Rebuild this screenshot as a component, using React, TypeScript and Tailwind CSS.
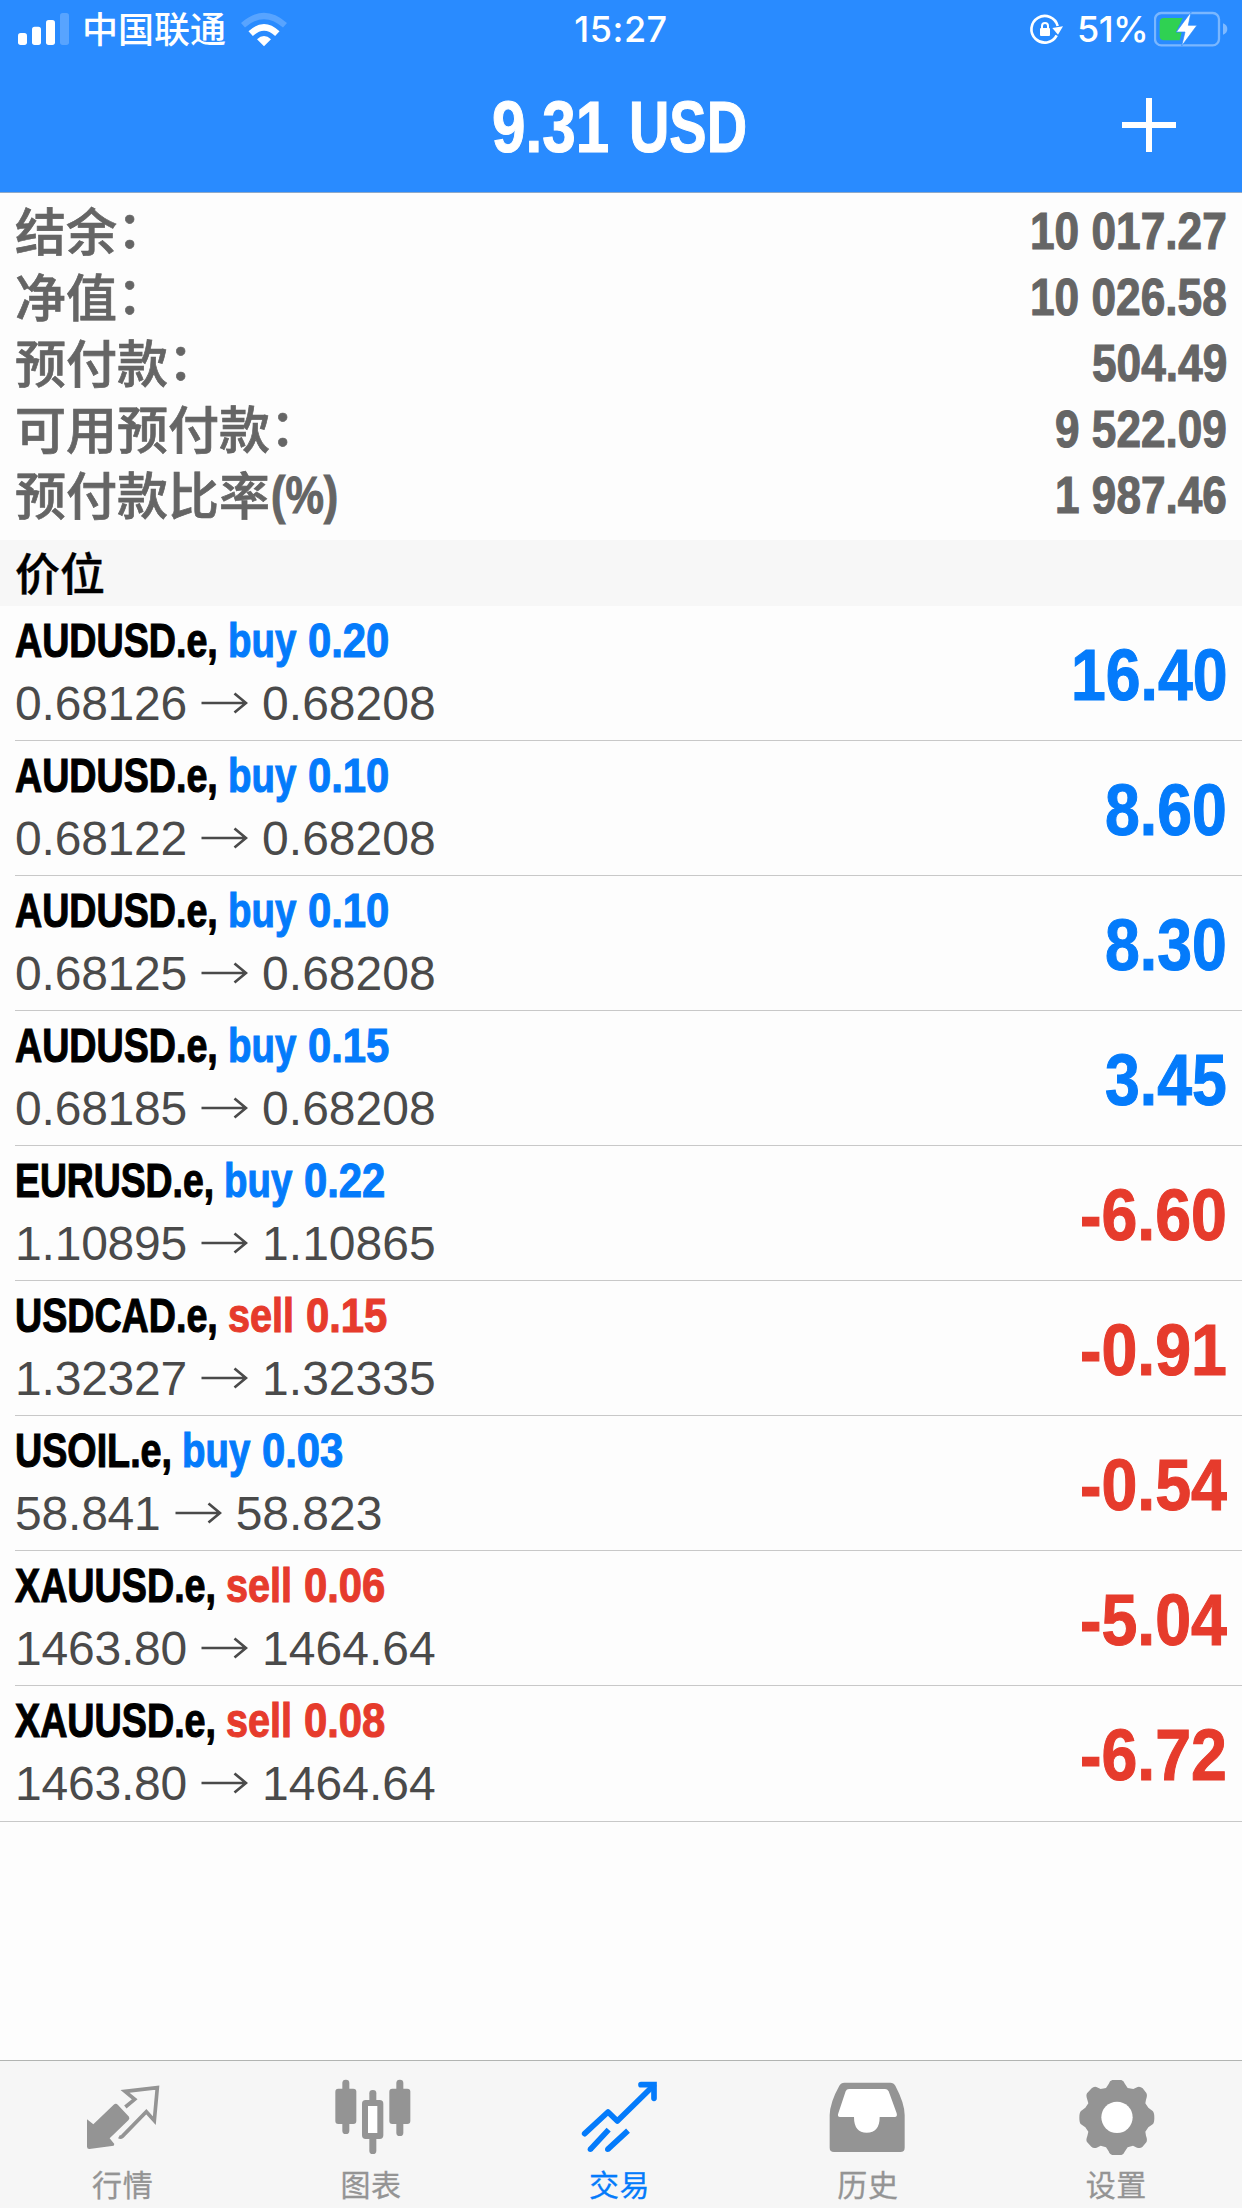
import { useLayoutEffect, useRef } from "react";
import type { ReactNode } from "react";

/** Text squeezed horizontally into the given width, as a condensed face. */
function Condensed({ width, children, className = "" }: { width: number; children: ReactNode; className?: string }) {
  const ref = useRef<HTMLSpanElement>(null);
  useLayoutEffect(() => {
    const el = ref.current;
    if (el) el.style.transform = `scaleX(${width / el.offsetWidth})`;
  }, [width, children]);
  return (
    <span className={"inline-block " + className} style={{ width }}>
      <span
        ref={ref}
        className="inline-block origin-left whitespace-pre font-bold [-webkit-text-stroke:1.1px_currentColor]"
      >
        {children}
      </span>
    </span>
  );
}

const numberWidth = (text: string, size: number) =>
  [...text].reduce((sum, c) => sum + (c === "." || c === " " ? 0.243 : c === "-" ? 0.35 : 0.482), 0) * size;

const summary = [
  ["结余", "：", "10 017.27"],
  ["净值", "：", "10 026.58"],
  ["预付款", "：", "504.49"],
  ["可用预付款", "：", "9 522.09"],
  ["预付款比率", "(%)", "1 987.46"],
];

type Position = {
  symbol: string;
  symbolWidth: number;
  side: "buy" | "sell";
  lots: string;
  open: string;
  now: string;
  profit: string;
};

const positions: Position[] = [
  { symbol: "AUDUSD.e,", symbolWidth: 203, side: "buy", lots: "0.20", open: "0.68126", now: "0.68208", profit: "16.40" },
  { symbol: "AUDUSD.e,", symbolWidth: 203, side: "buy", lots: "0.10", open: "0.68122", now: "0.68208", profit: "8.60" },
  { symbol: "AUDUSD.e,", symbolWidth: 203, side: "buy", lots: "0.10", open: "0.68125", now: "0.68208", profit: "8.30" },
  { symbol: "AUDUSD.e,", symbolWidth: 203, side: "buy", lots: "0.15", open: "0.68185", now: "0.68208", profit: "3.45" },
  { symbol: "EURUSD.e,", symbolWidth: 199, side: "buy", lots: "0.22", open: "1.10895", now: "1.10865", profit: "-6.60" },
  { symbol: "USDCAD.e,", symbolWidth: 203, side: "sell", lots: "0.15", open: "1.32327", now: "1.32335", profit: "-0.91" },
  { symbol: "USOIL.e,", symbolWidth: 157, side: "buy", lots: "0.03", open: "58.841", now: "58.823", profit: "-0.54" },
  { symbol: "XAUUSD.e,", symbolWidth: 201, side: "sell", lots: "0.06", open: "1463.80", now: "1464.64", profit: "-5.04" },
  { symbol: "XAUUSD.e,", symbolWidth: 201, side: "sell", lots: "0.08", open: "1463.80", now: "1464.64", profit: "-6.72" },
];

function StatusBar() {
  return (
    <div className="grid h-[58px] grid-cols-3 items-center text-[36px] leading-[58px] font-medium">
      <div className="flex items-center pl-[18px]">
        <svg className="h-[58px] w-[51px]" viewBox="54 0 153 174" fill="white">
          <rect x="54" y="99" width="27" height="36" rx="8" />
          <rect x="96" y="80" width="27" height="55" rx="8" />
          <rect x="138" y="60" width="27" height="75" rx="8" />
          <rect x="180" y="39" width="27" height="96" rx="8" opacity=".22" />
        </svg>
        <span className="ml-[13px] w-[145px] whitespace-nowrap pt-[2px] leading-[56px]">中国联通</span>
        <svg className="ml-[14px] h-[58px] w-[46px]" viewBox="723 0 138 174" fill="none" stroke="white">
          <path d="M729 76Q792 20 855 76" strokeWidth="18" opacity=".22" />
          <path d="M752 101Q792 63 832 101" strokeWidth="19" />
          <path d="M771 118Q792 98 813 118L792 139Z" fill="white" stroke="none" />
        </svg>
      </div>
      <div className="text-center tracking-[0.5px]">15:27</div>
      <div className="flex items-center justify-end pr-[14px]">
        <svg className="h-[58px] w-[34px]" viewBox="265 0 102 174">
          <path d="M348 106A40 40 0 1 1 351 78" fill="none" stroke="white" strokeWidth="8" />
          <path d="M335 84L367 79L352 104Z" fill="white" />
          <rect x="298" y="84" width="30" height="24" rx="3" fill="white" />
          <path d="M304 86V78a9 9 0 0 1 18 0V86" fill="none" stroke="white" strokeWidth="6" />
        </svg>
        <span className="ml-[14px] w-[70px] whitespace-nowrap tracking-[-0.6px]">51%</span>
        <svg className="ml-[7px] h-[58px] w-[74px]" viewBox="642 0 222 174">
          <rect x="645" y="39" width="192" height="97" rx="19" fill="none" stroke="white" strokeOpacity=".38" strokeWidth="7" />
          <path d="M849 70q13 5 13 17t-13 17z" fill="white" opacity=".4" />
          <path d="M672 54H728L708 97H725L719 121H672Q659 121 659 108V67Q659 54 672 54Z" fill="#2fd152" />
          <path d="M753 36L709 96H735L725 138L771 76H745Z" fill="white" stroke="#298bff" strokeWidth="2" />
        </svg>
      </div>
    </div>
  );
}

function Arrow() {
  return (
    <svg className="mr-[14px] ml-[13px] h-[63px] w-[48px]" viewBox="0 0 48 63" fill="none" stroke="#4a4a4a" strokeWidth="2.7">
      <path d="M1.5 31H46M34.5 21.5L46 31L34.5 40.5" />
    </svg>
  );
}

function PositionRow({ p, last }: { p: Position; last: boolean }) {
  const tone = p.side === "buy" ? "text-[#047bfb]" : "text-[#e63b2c]";
  const profitTone = p.profit.startsWith("-") ? "text-[#e63b2c]" : "text-[#047bfb]";
  return (
    <li className={last ? "border-b border-[#c8c8c8] pl-[15px]" : "pl-[15px]"}>
      <div
        className={
          "flex h-[135px] items-center justify-between pr-[15px] " + (last ? "pb-px" : "border-b border-[#c8c8c8]")
        }
      >
        <div className="h-[134px] pt-[3px] text-[48px]">
          <div className="flex h-[63px] items-center leading-[63px]">
            <Condensed width={p.symbolWidth}>{p.symbol}</Condensed>
            <Condensed width={p.side === "buy" ? 68 : 66} className={"ml-[10px] " + tone}>
              {p.side}
            </Condensed>
            <Condensed width={81} className={"ml-[12px] " + tone}>
              {p.lots}
            </Condensed>
          </div>
          <div className="flex h-[63px] items-center leading-[63px] text-[#4a4a4a]">
            <span className="tracking-[-0.2px]">{p.open}</span>
            <Arrow />
            <span>{p.now}</span>
          </div>
        </div>
        <div className={"pt-[4px] text-[72px] leading-[80px] " + profitTone}>
          <Condensed width={numberWidth(p.profit, 72)}>{p.profit}</Condensed>
        </div>
      </div>
    </li>
  );
}

function QuotesIcon() {
  return (
    <svg className="size-[80px]" viewBox="252 114 240 240">
      <path
        d="M261 238L280 253L341 194Q348 188 354 195L387 230Q390 236 385 241L329 295L343 312L341 317L268 327Q261 327 261 320Z"
        fill="#949494"
      />
      <path
        d="M376 201L404 178L375 154L472 143L463 242L439 215L367 289Q362 293 357 290"
        fill="none"
        stroke="#949494"
        strokeWidth="11"
      />
    </svg>
  );
}

function ChartsIcon() {
  return (
    <svg className="size-[80px]" viewBox="998 114 240 240" fill="#949494">
      <rect x="1026" y="119" width="21" height="163" rx="10" />
      <rect x="1005" y="146" width="63" height="106" rx="9" />
      <rect x="1107" y="150" width="21" height="192" rx="10" />
      <rect x="1094" y="189" width="46" height="99" rx="2" fill="white" stroke="#949494" strokeWidth="18" />
      <rect x="1188" y="119" width="21" height="169" rx="10" />
      <rect x="1167" y="146" width="63" height="106" rx="9" />
    </svg>
  );
}

function TradeIcon() {
  return (
    <svg className="size-[80px]" viewBox="123 114 240 240" fill="none" stroke="#047bfb" strokeWidth="17">
      <path d="M134 281L204 216L232 243L340 137" strokeLinecap="round" strokeLinejoin="round" />
      <path d="M303 134H342V175" strokeLinecap="round" />
      <path d="M206 269L151 328M264 272L203 328" />
      <circle cx="151" cy="328" r="8" fill="#047bfb" stroke="none" />
      <circle cx="203" cy="328" r="8" fill="#047bfb" stroke="none" />
    </svg>
  );
}

function HistoryIcon() {
  return (
    <svg className="size-[80px]" viewBox="868 114 240 240">
      <path
        d="M914 128H1052Q1062 128 1067 137Q1095 190 1095 225V323Q1095 336 1082 336H883Q870 336 870 323V225Q871 187 899 137Q904 128 914 128Z"
        fill="#949494"
      />
      <path
        d="M928 147H1036Q1043 147 1047 154L1071 220Q1074 231 1065 231H1020Q1020 278 981 278Q943 278 943 231H901Q892 231 896 220L918 154Q921 147 928 147Z"
        fill="white"
      />
    </svg>
  );
}

function SettingsIcon() {
  return (
    <svg className="size-[80px]" viewBox="233 114 240 240">
      <path
        d="M336 120H363Q370 122 374 132L382 144L399 147L412 141Q420 139 427 145L438 159Q442 166 437 179L435 190L444 203L457 213Q462 218 462 233Q462 248 457 253L444 262L435 275L437 287Q442 300 438 307L426 321Q420 326 410 323L398 317L382 322L374 334Q370 344 363 345H336Q328 344 325 334L317 322L301 317L289 323Q279 326 273 320L260 306Q256 300 261 288L264 275L255 262L242 253Q237 248 237 233Q237 218 242 213L255 203L264 190L261 179Q256 166 260 160L274 145Q280 139 288 141L301 147L317 144L325 132Q328 122 336 120Z"
        fill="#949494"
      />
      <circle cx="350" cy="232" r="47" fill="white" />
    </svg>
  );
}

const tabs = [
  { label: "行情", icon: <QuotesIcon /> },
  { label: "图表", icon: <ChartsIcon /> },
  { label: "交易", icon: <TradeIcon />, active: true },
  { label: "历史", icon: <HistoryIcon /> },
  { label: "设置", icon: <SettingsIcon /> },
];

export default function App() {
  return (
    <div className="flex h-[2208px] w-[1242px] flex-col overflow-hidden bg-[#fdfdfd] font-['Liberation_Sans','Noto_Sans_CJK_SC',sans-serif] text-black">
      <header className="h-[193px] shrink-0 border-b border-[#8fa9c8] bg-[#298bff] font-['Inter','Noto_Sans_CJK_SC',sans-serif] text-white">
        <StatusBar />
        <div className="grid h-[134px] grid-cols-[1fr_auto_1fr] items-center pt-[4px] font-['Liberation_Sans',sans-serif] text-[72px] leading-[130px]">
          <span />
          <h1 className="mr-[3px] flex">
            <Condensed width={117}>9.31</Condensed>
            <Condensed width={118} className="ml-[20px]">
              USD
            </Condensed>
          </h1>
          <svg className="mr-[66px] mb-[4px] size-[54px] justify-self-end" viewBox="0 0 54 54" stroke="white" strokeWidth="6">
            <path d="M27 0V54M0 27H54" />
          </svg>
        </div>
      </header>

      <section className="h-[347px] shrink-0 pt-[5px]">
        {summary.map(([label, suffix, value]) => (
          <div
            key={label}
            className="flex h-[66px] items-center justify-between px-[15px] text-[51px] leading-[66px] text-[#656565]"
          >
            <span className="flex">
              <span className="pb-[4px] font-['Noto_Sans_CJK_SC',sans-serif] leading-[62px] font-medium [-webkit-text-stroke:0.7px_currentColor]">
                {label}
              </span>
              {suffix === "：" ? (
                <span className="pb-[10px] font-['Noto_Sans_CJK_SC',sans-serif] leading-[56px] font-medium [-webkit-text-stroke:0.7px_currentColor]">
                  {suffix}
                </span>
              ) : (
                <Condensed width={67} className="ml-px pt-px leading-[65px]">
                  {suffix}
                </Condensed>
              )}
            </span>
            <span className="pt-[2px]">
              <Condensed width={numberWidth(value, 51)}>{value}</Condensed>
            </span>
          </div>
        ))}
      </section>

      <h2 className="h-[66px] shrink-0 bg-[#f7f7f7] px-[15px] pb-[2px] font-['Noto_Sans_CJK_SC',sans-serif] text-[45px] leading-[64px] font-medium [-webkit-text-stroke:0.4px_currentColor]">
        价位
      </h2>

      <ul className="grow">
        {positions.map((p, i) => (
          <PositionRow key={i} p={p} last={i === positions.length - 1} />
        ))}
      </ul>

      <nav className="grid h-[148px] shrink-0 grid-cols-5 border-t border-[#b2b4b2] bg-[#f6f6f6]">
        {tabs.map((t) => (
          <div
            key={t.label}
            className={
              "flex flex-col items-center pt-[17px] text-[30px] " + (t.active ? "text-[#047bfb]" : "text-[#949494]")
            }
          >
            {t.icon}
            <span className="mt-[8px] mr-[3px] leading-[40px] tracking-[0.6px] [-webkit-text-stroke:0.3px_currentColor]">
              {t.label}
            </span>
          </div>
        ))}
      </nav>
    </div>
  );
}
